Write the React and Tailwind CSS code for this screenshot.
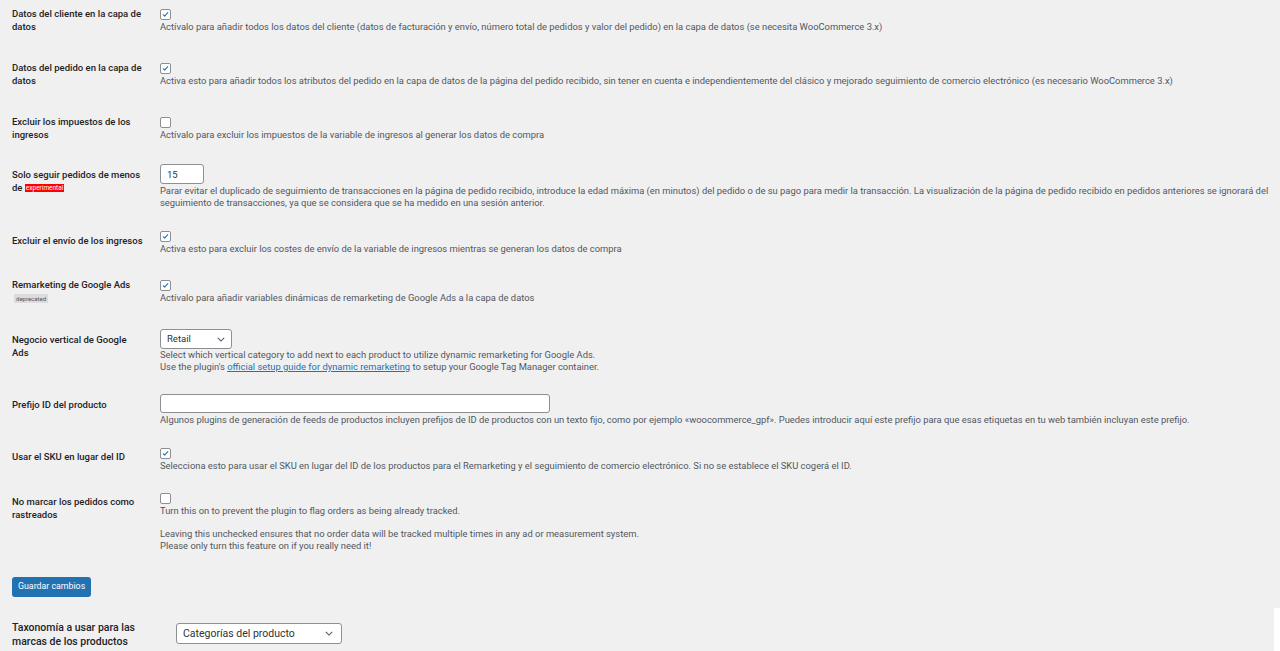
import React from 'react';

function Check({ checked }) {
  return (
    <span className="flex h-[11px] w-[11px] items-center justify-center rounded-[2px] border border-[#8c8f94] bg-white">
      {checked && (
        <svg viewBox="0 0 20 20" className="h-[11px] w-[11px]">
          <path d="M5 10.5l3.2 3.2L15 6" fill="none" stroke="#2271b1" strokeWidth="2.4" strokeLinecap="round" strokeLinejoin="round" />
        </svg>
      )}
    </span>
  );
}

function Chevron() {
  return (
    <svg viewBox="0 0 10 6" className="h-[5px] w-[8px]">
      <path d="M1 1l4 4 4-4" fill="none" stroke="#50575e" strokeWidth="1.3" />
    </svg>
  );
}

function Desc({ children, className = '' }) {
  return <p className={`text-[9.4px] leading-[12px] text-[#50575e] whitespace-nowrap ${className}`}>{children}</p>;
}

function Row({ label, labelPt = 'pt-0', mt, children }) {
  return (
    <div className={`flex ${mt}`}>
      <div className={`w-[148px] shrink-0 text-[9.5px] font-medium leading-[13px] text-[#1d2327] ${labelPt}`}>{label}</div>
      <div className="flex-1">{children}</div>
    </div>
  );
}

function CheckCell({ checked, children }) {
  return (
    <div className="pt-[2px]">
      <Check checked={checked} />
      <div className="mt-[1px]">{children}</div>
    </div>
  );
}

export default function App() {
  return (
    <div className="relative min-h-[651px] bg-[#f0f0f1] pl-3 pt-[7px] font-['Roboto',sans-serif]">
      <Row label={<>Datos del cliente en la capa de<br />datos</>}>
        <CheckCell checked>
          <Desc>Actívalo para añadir todos los datos del cliente (datos de facturación y envío, número total de pedidos y valor del pedido) en la capa de datos (se necesita WooCommerce 3.x)</Desc>
        </CheckCell>
      </Row>

      <Row mt="mt-[28px]" label={<>Datos del pedido en la capa de<br />datos</>}>
        <CheckCell checked>
          <Desc>Activa esto para añadir todos los atributos del pedido en la capa de datos de la página del pedido recibido, sin tener en cuenta e independientemente del clásico y mejorado seguimiento de comercio electrónico (es necesario WooCommerce 3.x)</Desc>
        </CheckCell>
      </Row>

      <Row mt="mt-[28px]" label={<>Excluir los impuestos de los<br />ingresos</>}>
        <CheckCell>
          <Desc>Actívalo para excluir los impuestos de la variable de ingresos al generar los datos de compra</Desc>
        </CheckCell>
      </Row>

      <Row
        mt="mt-[23px]"
        labelPt="pt-[4px]"
        label={
          <>
            Solo seguir pedidos de menos
            <br />
            de{' '}
            <span className="inline-block bg-[#ff0000] px-[1px] align-middle text-[6.5px] leading-[8px] font-normal text-white">experimental</span>
          </>
        }
      >
        <input
          readOnly
          value="15"
          className="block h-[20px] w-[44px] rounded-[3px] border border-[#8c8f94] bg-white px-[6px] text-[9.5px] text-[#2c3338] outline-none"
        />
        <Desc className="mt-[1px]">
          Parar evitar el duplicado de seguimiento de transacciones en la página de pedido recibido, introduce la edad máxima (en minutos) del pedido o de su pago para medir la transacción. La visualización de la página de pedido recibido en pedidos anteriores se ignorará del
          <br />
          seguimiento de transacciones, ya que se considera que se ha medido en una sesión anterior.
        </Desc>
      </Row>

      <Row mt="mt-[20px]" labelPt="pt-[5px]" label="Excluir el envío de los ingresos">
        <CheckCell checked>
          <Desc>Activa esto para excluir los costes de envío de la variable de ingresos mientras se generan los datos de compra</Desc>
        </CheckCell>
      </Row>

      <Row
        mt="mt-[23px]"
        label={
          <>
            Remarketing de Google Ads
            <br />
            <span className="ml-[2px] mt-[2px] inline-block bg-[#dcdcde] px-[2px] text-[6px] leading-[9px] font-normal text-[#50575e]">deprecated</span>
          </>
        }
      >
        <CheckCell checked>
          <Desc>Actívalo para añadir variables dinámicas de remarketing de Google Ads a la capa de datos</Desc>
        </CheckCell>
      </Row>

      <Row mt="mt-[25px]" labelPt="pt-[4px]" label={<>Negocio vertical de Google<br />Ads</>}>
        <div className="flex h-[20px] w-[72px] items-center justify-between rounded-[3px] border border-[#8c8f94] bg-white pl-[6px] pr-[6px] text-[9.5px] text-[#2c3338]">
          <span>Retail</span>
          <Chevron />
        </div>
        <Desc>
          Select which vertical category to add next to each product to utilize dynamic remarketing for Google Ads.
          <br />
          Use the plugin's{' '}
          <a href="#" className="text-[#2271b1] underline">official setup guide for dynamic remarketing</a> to setup your Google Tag Manager container.
        </Desc>
      </Row>

      <Row mt="mt-[21px]" labelPt="pt-[4px]" label="Prefijo ID del producto">
        <input readOnly className="block h-[19px] w-[390px] rounded-[3px] border border-[#8c8f94] bg-white outline-none" />
        <Desc className="mt-[1px]">Algunos plugins de generación de feeds de productos incluyen prefijos de ID de productos con un texto fijo, como por ejemplo «woocommerce_gpf». Puedes introducir aquí este prefijo para que esas etiquetas en tu web también incluyan este prefijo.</Desc>
      </Row>

      <Row mt="mt-[20px]" labelPt="pt-[4px]" label="Usar el SKU en lugar del ID">
        <CheckCell checked>
          <Desc>Selecciona esto para usar el SKU en lugar del ID de los productos para el Remarketing y el seguimiento de comercio electrónico. Si no se establece el SKU cogerá el ID.</Desc>
        </CheckCell>
      </Row>

      <Row mt="mt-[19px]" labelPt="pt-[4px]" label={<>No marcar los pedidos como<br />rastreados</>}>
        <CheckCell>
          <Desc>Turn this on to prevent the plugin to flag orders as being already tracked.</Desc>
          <Desc className="mt-[11px]">
            Leaving this unchecked ensures that no order data will be tracked multiple times in any ad or measurement system.
            <br />
            Please only turn this feature on if you really need it!
          </Desc>
        </CheckCell>
      </Row>

      <button className="mt-[25px] block h-[20px] rounded-[3px] bg-[#2271b1] px-[6px] text-[8.8px] text-white">Guardar cambios</button>

      <div className="mt-[26px] flex">
        <div className="w-[164px] shrink-0 -mt-[2px] text-[10.5px] font-medium leading-[14px] text-[#1d2327]">
          Taxonomía a usar para las
          <br />
          marcas de los productos
        </div>
        <div className="flex h-[21px] w-[166px] items-center justify-between rounded-[3px] border border-[#8c8f94] bg-white pl-[6px] pr-[8px] text-[10.5px] text-[#2c3338]">
          <span>Categorías del producto</span>
          <Chevron />
        </div>
      </div>

      <div className="absolute bottom-0 right-0 h-[43px] w-[6px] bg-white" />
    </div>
  );
}
